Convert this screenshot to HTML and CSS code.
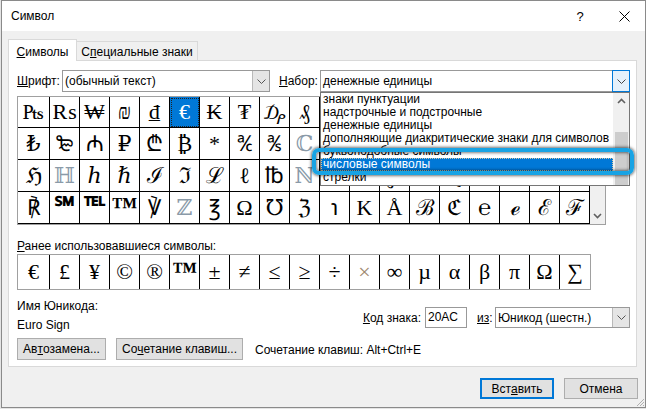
FILE: index.html
```html
<!DOCTYPE html>
<html lang="ru">
<head>
<meta charset="utf-8">
<title>Символ</title>
<link rel="stylesheet" href="styles.css">
</head>
<body>
<div class="window">
  <div class="titlebar">
    <span class="title">Символ</span>
    <span class="tb-btn help">?</span>
    <span class="tb-btn close"><svg width="11" height="11" viewBox="0 0 11 11"><path d="M0.5 0.5 L10.5 10.5 M10.5 0.5 L0.5 10.5" stroke="#000" stroke-width="1" fill="none"/></svg></span>
  </div>
  <div class="content">
    <div class="tabs">
      <div class="tab active"><u>С</u>имволы</div>
      <div class="tab">С<u>п</u>ециальные знаки</div>
    </div>
    <div class="panel">
      <div class="font-row">
        <span class="lbl lbl-font"><u>Ш</u>рифт:</span>
        <div class="combo combo-font">
          <span class="combo-text">(обычный текст)</span>
          <span class="combo-btn"><svg width="9" height="5" viewBox="0 0 9 5"><polyline points="0.5,0.5 4.5,4.5 8.5,0.5" fill="none" stroke="#555" stroke-width="1"/></svg></span>
        </div>
        <span class="lbl lbl-set"><u>Н</u>абор:</span>
        <div class="combo combo-set">
          <span class="combo-text">денежные единицы</span>
          <span class="combo-btn hot"><svg width="9" height="5" viewBox="0 0 9 5"><polyline points="0.5,0.5 4.5,4.5 8.5,0.5" fill="none" stroke="#444" stroke-width="1"/></svg></span>
          <div class="droplist">
            <div class="items">
              <div class="item">знаки пунктуации</div>
              <div class="item">надстрочные и подстрочные</div>
              <div class="item">денежные единицы</div>
              <div class="item">дополняющие диакритические знаки для символов</div>
              <div class="item">буквоподобные символы</div>
              <div class="item selected">числовые символы</div>
              <div class="item">стрелки</div>
            </div>
            <div class="lscroll">
              <span class="lscroll-up"><svg width="9" height="6" viewBox="0 0 9 6"><polyline points="1,5 4.5,1.5 8,5" fill="none" stroke="#606060" stroke-width="1.6"/></svg></span>
              <span class="lscroll-thumb"></span>
            </div>
            <div class="callout"></div>
          </div>
        </div>
      </div>

      <div class="symgrid">
        <div class="cells">
          <span class="c">₧</span><span class="c">₨</span><span class="c">₩</span><span class="c">₪</span><span class="c">₫</span><span class="c sel">€</span><span class="c">₭</span><span class="c">₮</span><span class="c">₯</span><span class="c">₰</span><span class="c">₱</span><span class="c">₲</span><span class="c">₳</span><span class="c">₴</span><span class="c">₵</span><span class="c">₶</span><span class="c">₷</span><span class="c">₸</span><span class="c">₹</span>
          <span class="c">₺</span><span class="c">₻</span><span class="c">₼</span><span class="c">₽</span><span class="c">₾</span><span class="c">₿</span><span class="c star">*</span><span class="c">℀</span><span class="c">℁</span><span class="c lite">ℂ</span><span class="c">℃</span><span class="c">℄</span><span class="c">℅</span><span class="c">℆</span><span class="c">ℇ</span><span class="c">℈</span><span class="c">℉</span><span class="c">ℊ</span><span class="c">ℋ</span>
          <span class="c">ℌ</span><span class="c lite">ℍ</span><span class="c">ℎ</span><span class="c">ℏ</span><span class="c">ℐ</span><span class="c">ℑ</span><span class="c">ℒ</span><span class="c">ℓ</span><span class="c">℔</span><span class="c lite">ℕ</span><span class="c">№</span><span class="c">℗</span><span class="c">℘</span><span class="c">ℙ</span><span class="c">ℚ</span><span class="c">ℛ</span><span class="c">ℜ</span><span class="c">ℝ</span><span class="c">℞</span>
          <span class="c">℟</span><span class="c small">℠</span><span class="c small">℡</span><span class="c small">™</span><span class="c">℣</span><span class="c lite">ℤ</span><span class="c">℥</span><span class="c">Ω</span><span class="c">℧</span><span class="c">ℨ</span><span class="c">℩</span><span class="c">K</span><span class="c">Å</span><span class="c">ℬ</span><span class="c">ℭ</span><span class="c">℮</span><span class="c">ℯ</span><span class="c">ℰ</span><span class="c">ℱ</span>
        </div>
        <div class="vscroll">
          <span class="vscroll-down"><svg width="9" height="6" viewBox="0 0 9 6"><polyline points="1,1 4.5,4.5 8,1" fill="none" stroke="#606060" stroke-width="1.6"/></svg></span>
        </div>
      </div>

      <div class="recent-label"><u>Р</u>анее использовавшиеся символы:</div>
      <div class="recent">
        <span class="r">€</span><span class="r">£</span><span class="r">¥</span><span class="r">©</span><span class="r">®</span><span class="r tm">™</span><span class="r">±</span><span class="r">≠</span><span class="r">≤</span><span class="r">≥</span><span class="r">÷</span><span class="r times">×</span><span class="r">∞</span><span class="r">µ</span><span class="r">α</span><span class="r">β</span><span class="r">π</span><span class="r">Ω</span><span class="r last">∑</span>
      </div>

      <div class="info-row">
        <div class="uname">
          <div>Имя Юникода:</div>
          <div>Euro Sign</div>
        </div>
        <div class="code-row">
          <span class="lbl"><u>К</u>од знака:</span>
          <span class="codebox">20AC</span>
          <span class="lbl lbl-from"><u>из</u>:</span>
          <div class="combo combo-from">
            <span class="combo-text">Юникод (шестн.)</span>
            <span class="combo-btn"><svg width="9" height="5" viewBox="0 0 9 5"><polyline points="0.5,0.5 4.5,4.5 8.5,0.5" fill="none" stroke="#555" stroke-width="1"/></svg></span>
          </div>
        </div>
      </div>

      <div class="btn-row">
        <span class="btn btn-auto">Ав<u>т</u>озамена...</span>
        <span class="btn btn-keys">Со<u>ч</u>етание клавиш...</span>
        <span class="keys-text">Сочетание клавиш: Alt+Ctrl+E</span>
      </div>
    </div>

    <div class="bottom-row">
      <span class="btn dlg default">Вст<u>а</u>вить</span>
      <span class="btn dlg">Отмена</span>
    </div>
  </div>
  <svg class="grip" width="10" height="10" viewBox="0 0 10 10"><path d="M9 2 L2 9 M9 5 L5 9 M9 8 L8 9" stroke="#b0b0b0" stroke-width="1"/></svg>
</div>
</body>
</html>
```

FILE: styles.css
```css
* { box-sizing: border-box; }
html, body { margin: 0; padding: 0; }
body {
  background: #e4e4e4;
  font-family: "Liberation Sans", Arial, sans-serif;
  font-size: 12px;
  color: #000;
  overflow: hidden;
}
u { text-decoration: underline; text-underline-offset: 1px; }

.window {
  margin-left: 1px;
  width: 645px;
  height: 408px;
  border: 1px solid #8a8a8a;
  background: #f0f0f0;
  display: flex;
  flex-direction: column;
  position: relative;
}
.grip { position: absolute; right: 0; bottom: 0; }

.titlebar {
  height: 30px;
  background: #fff;
  display: flex;
  align-items: center;
  padding-left: 9px;
  flex: none;
}
.title { font-size: 12px; }
.tb-btn {
  height: 30px;
  display: flex;
  align-items: center;
  justify-content: center;
}
.help { margin-left: auto; width: 46px; font-size: 13px; padding-top: 1px; }
.close { width: 42px; }

.content {
  flex: 1;
  padding: 8px 8px 8px 6px;
  display: flex;
  flex-direction: column;
}

.tabs {
  height: 21px;
  display: flex;
  align-items: flex-end;
}
.tab {
  border: 1px solid #d9d9d9;
  border-bottom: none;
  text-align: center;
  line-height: 16px;
  background: #f0f0f0;
  height: 19px;
  padding-top: 2px;
  width: 122px;
  margin-left: -1px;
}
.tab.active {
  width: 69px;
  height: 22px;
  margin-left: 0;
  margin-bottom: -1px;
  padding-top: 4px;
  background: #fff;
  position: relative;
  z-index: 2;
}

.panel {
  border: 1px solid #d9d9d9;
  background: #fff;
  padding: 9px 6px 6px 8px;
  position: relative;
}

.font-row {
  display: flex;
  height: 22px;
  align-items: center;
}
.lbl { white-space: nowrap; }
.lbl-font { width: 45px; }
.lbl-set { width: 41px; margin-left: 9px; }

.combo {
  height: 22px;
  border: 1px solid #999;
  background: #fff;
  display: flex;
  align-items: center;
  position: relative;
}
.combo-font { width: 208px; }
.combo-set { width: 310px; z-index: 5; }
.combo-text { flex: 1; padding-left: 2px; white-space: nowrap; line-height: 16px; }
.combo-btn {
  width: 17px;
  align-self: stretch;
  background: #e5e5e5;
  border-left: 1px solid #b9b9b9;
  display: flex;
  align-items: center;
  justify-content: center;
}
.combo-btn.hot {
  background: #e5f1fb;
  border: 1px solid #0078d7;
  margin: -1px -1px -1px 0;
  width: 18px;
}

.droplist {
  position: absolute;
  left: -1px;
  top: 21px;
  width: 310px;
  height: 94px;
  border: 1px solid #767676;
  background: #fff;
  display: flex;
}
.items { flex: 1; }
.item {
  line-height: 13px;
  height: 13px;
  padding-left: 2px;
  white-space: nowrap;
  overflow: hidden;
}
.item.selected {
  background: #0078d7;
  color: #fff;
  outline: 1px dotted #d8c8a0;
  outline-offset: -1px;
}
.lscroll {
  width: 16px;
  background: #f0f0f0;
  display: flex;
  flex-direction: column;
}
.lscroll-up {
  height: 16px;
  display: flex;
  align-items: center;
  justify-content: center;
}
.lscroll-thumb {
  flex: 1;
  margin: 23px 1px 0 2px;
  background: #cdcdcd;
}
.callout {
  position: absolute;
  left: -9px;
  top: 55px;
  width: 322px;
  height: 27px;
  border: 4px solid #18a3e4;
  border-radius: 7px;
  box-shadow: 0 0 3px 1px rgba(0,0,0,0.55), inset 0 0 3px 1px rgba(0,0,0,0.5);
}

.symgrid {
  margin-top: 4px;
  width: 589px;
  border: 1px solid #a0a0a0;
  display: flex;
}
.cells {
  display: grid;
  grid-template-columns: 32px repeat(18, 30px);
  grid-template-rows: 31px 32px 32px 32px;
}
.c {
  border-right: 1px solid #000;
  border-bottom: 1px solid #000;
  display: flex;
  align-items: center;
  justify-content: center;
  font-family: "Liberation Serif", "DejaVu Serif", "Times New Roman", serif;
  font-size: 22px;
  line-height: 1;
  overflow: hidden;
}
.c.small { font-size: 26px; font-weight: bold; align-items: flex-start; padding-top: 2px; }
.c.star { align-items: flex-start; padding-top: 5px; }
.c.lite { color: #8a9aa8; }
.c.sel {
  background: #0078d7;
  color: #fff;
  outline: 1px dotted #222;
  outline-offset: -2px;
}
.vscroll {
  width: 15px;
  background: #f0f0f0;
  display: flex;
  flex-direction: column;
  justify-content: flex-end;
}
.vscroll-down {
  height: 16px;
  display: flex;
  align-items: center;
  justify-content: center;
}

.recent-label {
  margin-top: 13px;
  line-height: 16px;
  height: 16px;
}
.recent {
  width: 574px;
  height: 36px;
  border: 1px solid #a0a0a0;
  display: grid;
  grid-template-columns: 32px repeat(18, 30px);
}
.r {
  border-right: 1px solid #000;
  display: flex;
  align-items: center;
  justify-content: center;
  font-family: "Liberation Serif", "DejaVu Serif", "Times New Roman", serif;
  font-size: 22px;
  line-height: 1;
}
.r.last { border-right: none; }
.r.tm { font-size: 25px; font-weight: bold; align-items: flex-start; padding-top: 3px; }
.r.times { color: #a08a70; }

.info-row {
  margin-top: 7px;
  display: flex;
  height: 38px;
}
.uname { line-height: 19px; }
.code-row {
  margin-left: auto;
  margin-top: 10px;
  height: 21px;
  display: flex;
  align-items: center;
}
.codebox {
  margin-left: 4px;
  width: 42px;
  height: 21px;
  border: 1px solid #999;
  padding-left: 2px;
  line-height: 19px;
}
.lbl-from { margin-left: 10px; width: 18px; }
.combo-from { width: 135px; height: 21px; }

.btn-row {
  margin-top: 3px;
  display: flex;
  align-items: center;
  height: 22px;
}
.btn {
  height: 22px;
  background: #e1e1e1;
  border: 1px solid #adadad;
  display: flex;
  align-items: center;
  justify-content: center;
  white-space: nowrap;
}
.btn-auto { width: 89px; }
.btn-keys { width: 127px; margin-left: 10px; }
.keys-text { margin-left: 12px; padding-top: 2px; }

.bottom-row {
  margin-top: 11px;
  display: flex;
  justify-content: flex-end;
  gap: 10px;
  margin-right: -1px;
}
.btn.dlg { width: 74px; height: 21px; }
.btn.default { border: 2px solid #0078d7; }
```
